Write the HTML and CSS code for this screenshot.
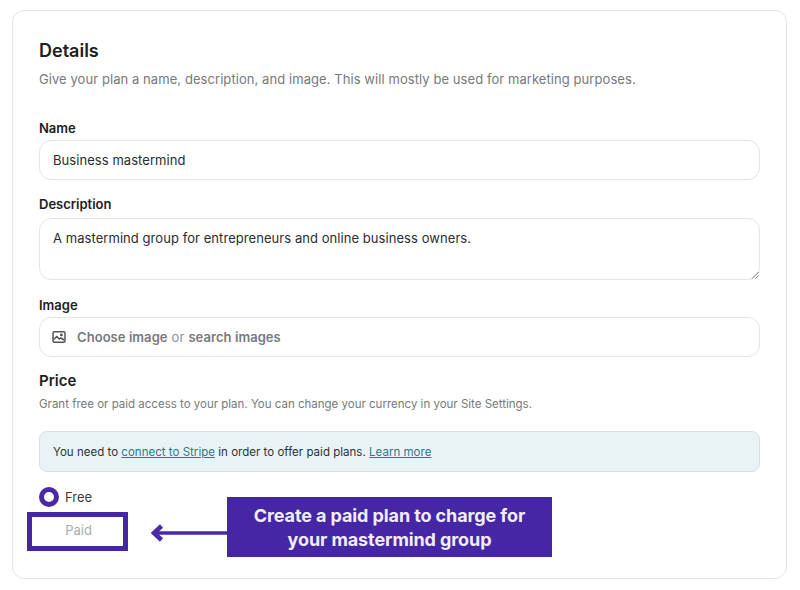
FILE: index.html
```html
<!DOCTYPE html>
<html lang="en">
<head>
  <meta charset="UTF-8" />
  <title>Plan details</title>
  <link rel="stylesheet" href="styles.css">
</head>
<body>

<div class="card">
  <h2>Details</h2>
  <p class="lead">Give your plan a name, description, and image. This will mostly be used for marketing purposes.</p>

  <label class="label label-name">Name</label>
  <div class="field">Business mastermind</div>

  <label class="label label-desc">Description</label>
  <div class="field field-area">
    A mastermind group for entrepreneurs and online business owners.
    <svg class="grip" width="8" height="8" viewBox="0 0 8 8"><path d="M1 7.5 7.5 1M4.5 7.5 7.5 4.5" stroke="#777" stroke-width="1" fill="none"/></svg>
  </div>

  <label class="label label-image">Image</label>
  <div class="field field-image">
    <svg width="14" height="14" viewBox="0 0 14 14" fill="none" stroke="#555" stroke-width="1.5"><rect x="1" y="1.8" width="12" height="10.4" rx="1.5"/><path d="M1.5 9.5 4.8 6.6l2.6 2.4 1.4-1 3.4 2" /><circle cx="9.4" cy="4.9" r=".7"/></svg>
    <span class="muted-strong">Choose image</span> <span class="muted">or</span> <span class="muted-strong">search images</span>
  </div>

  <h3>Price</h3>
  <p class="lead-small">Grant free or paid access to your plan. You can change your currency in your Site Settings.</p>

  <div class="notice">You need to <a href="#">connect to Stripe</a> in order to offer paid plans. <a href="#">Learn more</a></div>

  <div class="plan-type">
    <div class="option">
      <span class="radio"></span>
      <span>Free</span>
    </div>
    <div class="option-paid">Paid</div>

    <svg class="arrow" width="80" height="20" viewBox="0 0 80 20" fill="none" stroke="#4a28a6"><path d="M79 10H6" stroke-width="3.5"/><path d="M12.5 3 5 10l7.500 7" stroke-width="4.500"/></svg>
    <div class="callout">Create a paid plan to charge for<br>your mastermind group</div>
  </div>
</div>

</body>
</html>
```

FILE: styles.css
```css
* {
  box-sizing: border-box;
}

body {
  font-family: 'Inter', sans-serif;
  background: #fff;
  color: #1b2024;
  margin: 0;
  padding: 10px 13px 0 12px;
}

.card {
  height: 569px;
  padding: 30px 26px 0;
  border: 1px solid #e2e4e6;
  border-radius: 12px;
}

h2 {
  margin: 0;
  font-size: 18px;
  line-height: 20px;
  font-weight: 600;
}

h3 {
  margin: 14px 0 0;
  font-size: 15px;
  line-height: 20px;
  font-weight: 600;
}

.lead {
  margin: 8px 0 0;
  font-size: 13px;
  line-height: 20px;
  letter-spacing: 0.07px;
  color: #77797c;
}

.lead-small {
  margin: 5px 0 0;
  font-size: 11.5px;
  line-height: 16px;
  color: #77797c;
}

.label {
  display: block;
  font-size: 13px;
  line-height: 16px;
  font-weight: 600;
}

.label-name {
  margin-top: 31px;
  margin-bottom: 4px;
}

.label-desc {
  margin-top: 16px;
  margin-bottom: 6px;
}

.label-image {
  margin-top: 17px;
  margin-bottom: 4px;
}

.field {
  position: relative;
  height: 40px;
  padding: 0 13px;
  border: 1px solid #e2e4e6;
  border-radius: 12px;
  font-size: 13px;
  line-height: 38px;
  letter-spacing: 0.06px;
  color: #2a2d31;
}

.field-area {
  height: 62px;
}

.grip {
  position: absolute;
  right: 0;
  bottom: 0;
}

.field-image {
  display: flex;
  align-items: center;
  gap: 4px;
}

.field-image svg {
  margin: 0 7px 0 -1px;
}

.muted-strong {
  font-weight: 600;
  color: #77797c;
}

.muted {
  color: #8e9093;
}

.notice {
  margin-top: 19px;
  height: 41px;
  padding: 0 13px;
  background: #e9f3f5;
  border: 1px solid #d3e2e5;
  border-radius: 8px;
  font-size: 11.5px;
  line-height: 40px;
  letter-spacing: 0.02px;
  color: #2a3338;
}

.notice a {
  color: #2b7a87;
}

.plan-type {
  position: relative;
  margin-top: 15px;
}

.option {
  display: flex;
  align-items: center;
  gap: 6px;
  height: 20px;
  font-size: 13px;
  color: #3a3d41;
}

.radio {
  width: 20px;
  height: 20px;
  border: 5px solid #4a28a6;
  border-radius: 50%;
}

.option-paid {
  width: 101px;
  height: 39px;
  margin: 5px 0 0 -12px;
  padding-left: 2px;
  border: 5px solid #4526a4;
  font-size: 13px;
  line-height: 27px;
  text-align: center;
  color: #a9abad;
}

.arrow {
  position: absolute;
  left: 110px;
  top: 36px;
}

.callout {
  position: absolute;
  left: 188px;
  top: 10px;
  width: 325px;
  height: 60px;
  background: #4526a4;
  color: #f1edfb;
  font-size: 18px;
  line-height: 24px;
  letter-spacing: -0.1px;
  font-weight: 700;
  text-align: center;
  padding-top: 7px;
}
```
